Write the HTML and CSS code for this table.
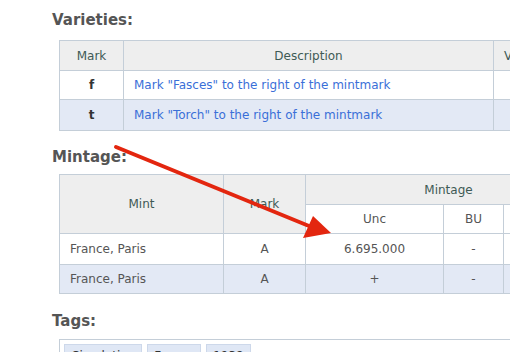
FILE: index.html
```html
<!DOCTYPE html>
<html>
<head>
<meta charset="utf-8">
<link rel="stylesheet" href="styles.css">
</head>
<body>
<div class="page">
  <h3 class="section-title first">Varieties:</h3>
  <table class="grid varieties">
    <colgroup><col class="c-mark"><col class="c-desc"><col class="c-extra"></colgroup>
    <tr class="head"><th>Mark</th><th>Description</th><th class="left">V</th></tr>
    <tr><td class="center strong">f</td><td class="left"><a href="#">Mark "Fasces" to the right of the mintmark</a></td><td></td></tr>
    <tr class="alt"><td class="center strong">t</td><td class="left"><a href="#">Mark "Torch" to the right of the mintmark</a></td><td></td></tr>
  </table>

  <h3 class="section-title">Mintage:</h3>
  <table class="grid mintage">
    <colgroup><col class="c-mint"><col class="c-mmark"><col class="c-unc"><col class="c-bu"><col class="c-more"></colgroup>
    <tr class="head"><th rowspan="2">Mint</th><th rowspan="2">Mark</th><th colspan="3" class="span-head">Mintage</th></tr>
    <tr class="subhead"><th>Unc</th><th>BU</th><th></th></tr>
    <tr><td class="left">France, Paris</td><td class="center">A</td><td class="center">6.695.000</td><td class="center">-</td><td></td></tr>
    <tr class="alt"><td class="left">France, Paris</td><td class="center">A</td><td class="center">+</td><td class="center">-</td><td></td></tr>
  </table>

  <h3 class="section-title">Tags:</h3>
  <div class="tags">
    <span class="tag">Circulation</span><span class="tag">France</span><span class="tag">1938</span>
  </div>

  <svg class="arrow" width="510" height="352" viewBox="0 0 510 352">
    <line x1="116" y1="147" x2="309" y2="226" stroke="#e3260f" stroke-width="4" stroke-linecap="round"/>
    <polygon points="313,216 303,238 331,233" fill="#e3260f"/>
  </svg>
</div>
</body>
</html>
```

FILE: styles.css
```css
html, body {
  margin: 0;
  padding: 0;
  background: #ffffff;
  overflow: hidden;
}
body {
  width: 510px;
  height: 352px;
  font-family: "DejaVu Sans", Verdana, sans-serif;
  font-size: 12px;
  color: #555555;
}
.page {
  position: relative;
  width: 510px;
  height: 352px;
  padding-left: 52px;
  box-sizing: border-box;
  overflow: hidden;
}
.section-title {
  margin: 0;
  font-size: 15px;
  font-weight: bold;
  color: #555555;
  height: 20px;
  line-height: 20px;
}
.section-title.first {
  padding-top: 10px;
  margin-bottom: 10px;
}
.varieties + .section-title {
  margin-top: 16px;
  margin-bottom: 7px;
}
.mintage + .section-title {
  margin-top: 17px;
  margin-bottom: 8px;
}
.grid {
  margin-left: 7px;
  border-collapse: collapse;
  table-layout: fixed;
  width: 600px;
}
.grid th, .grid td {
  border: 1px solid #c4ced8;
  padding: 0 10px;
  height: 28px;
  white-space: nowrap;
  overflow: hidden;
}
.grid th {
  background: #eeeeee;
  font-weight: normal;
  color: #3e5a55;
  text-align: center;
}
.grid th.left { text-align: left; }
.grid td { background: #ffffff; }
.grid tr.alt td { background: #e3e9f5; }
.center { text-align: center; }
.left { text-align: left; }
.strong { font-weight: bold; color: #333333; }
.grid a { color: #3a6fd8; text-decoration: none; }

.varieties .head th { height: 29px; }
.varieties td { height: 28px; }
.varieties tr.alt td { height: 30px; }
.c-mark { width: 64px; }
.c-desc { width: 370px; }
.c-extra { width: 166px; }

.mintage { width: 532px; }
.mintage .head th { height: 29px; }
.mintage .subhead th { height: 28px; background: #ffffff; color: #555555; }
.mintage td { height: 30px; }
.mintage tr.alt td { height: 28px; }
.c-mint { width: 164px; }
.c-mmark { width: 82px; }
.c-unc { width: 138px; }
.c-bu { width: 60px; }
.c-more { width: 88px; }

.tags {
  margin-left: 7px;
  border: 1px solid #c4ced8;
  padding: 4px 4px;
  width: 600px;
  display: flex;
  gap: 5px;
}
.tag {
  background: #dfe7f5;
  border: 1px solid #cdd8ea;
  padding: 3px 6px;
  color: #333333;
  line-height: 16px;
}

.arrow {
  position: absolute;
  left: 0;
  top: 0;
  pointer-events: none;
}
```
